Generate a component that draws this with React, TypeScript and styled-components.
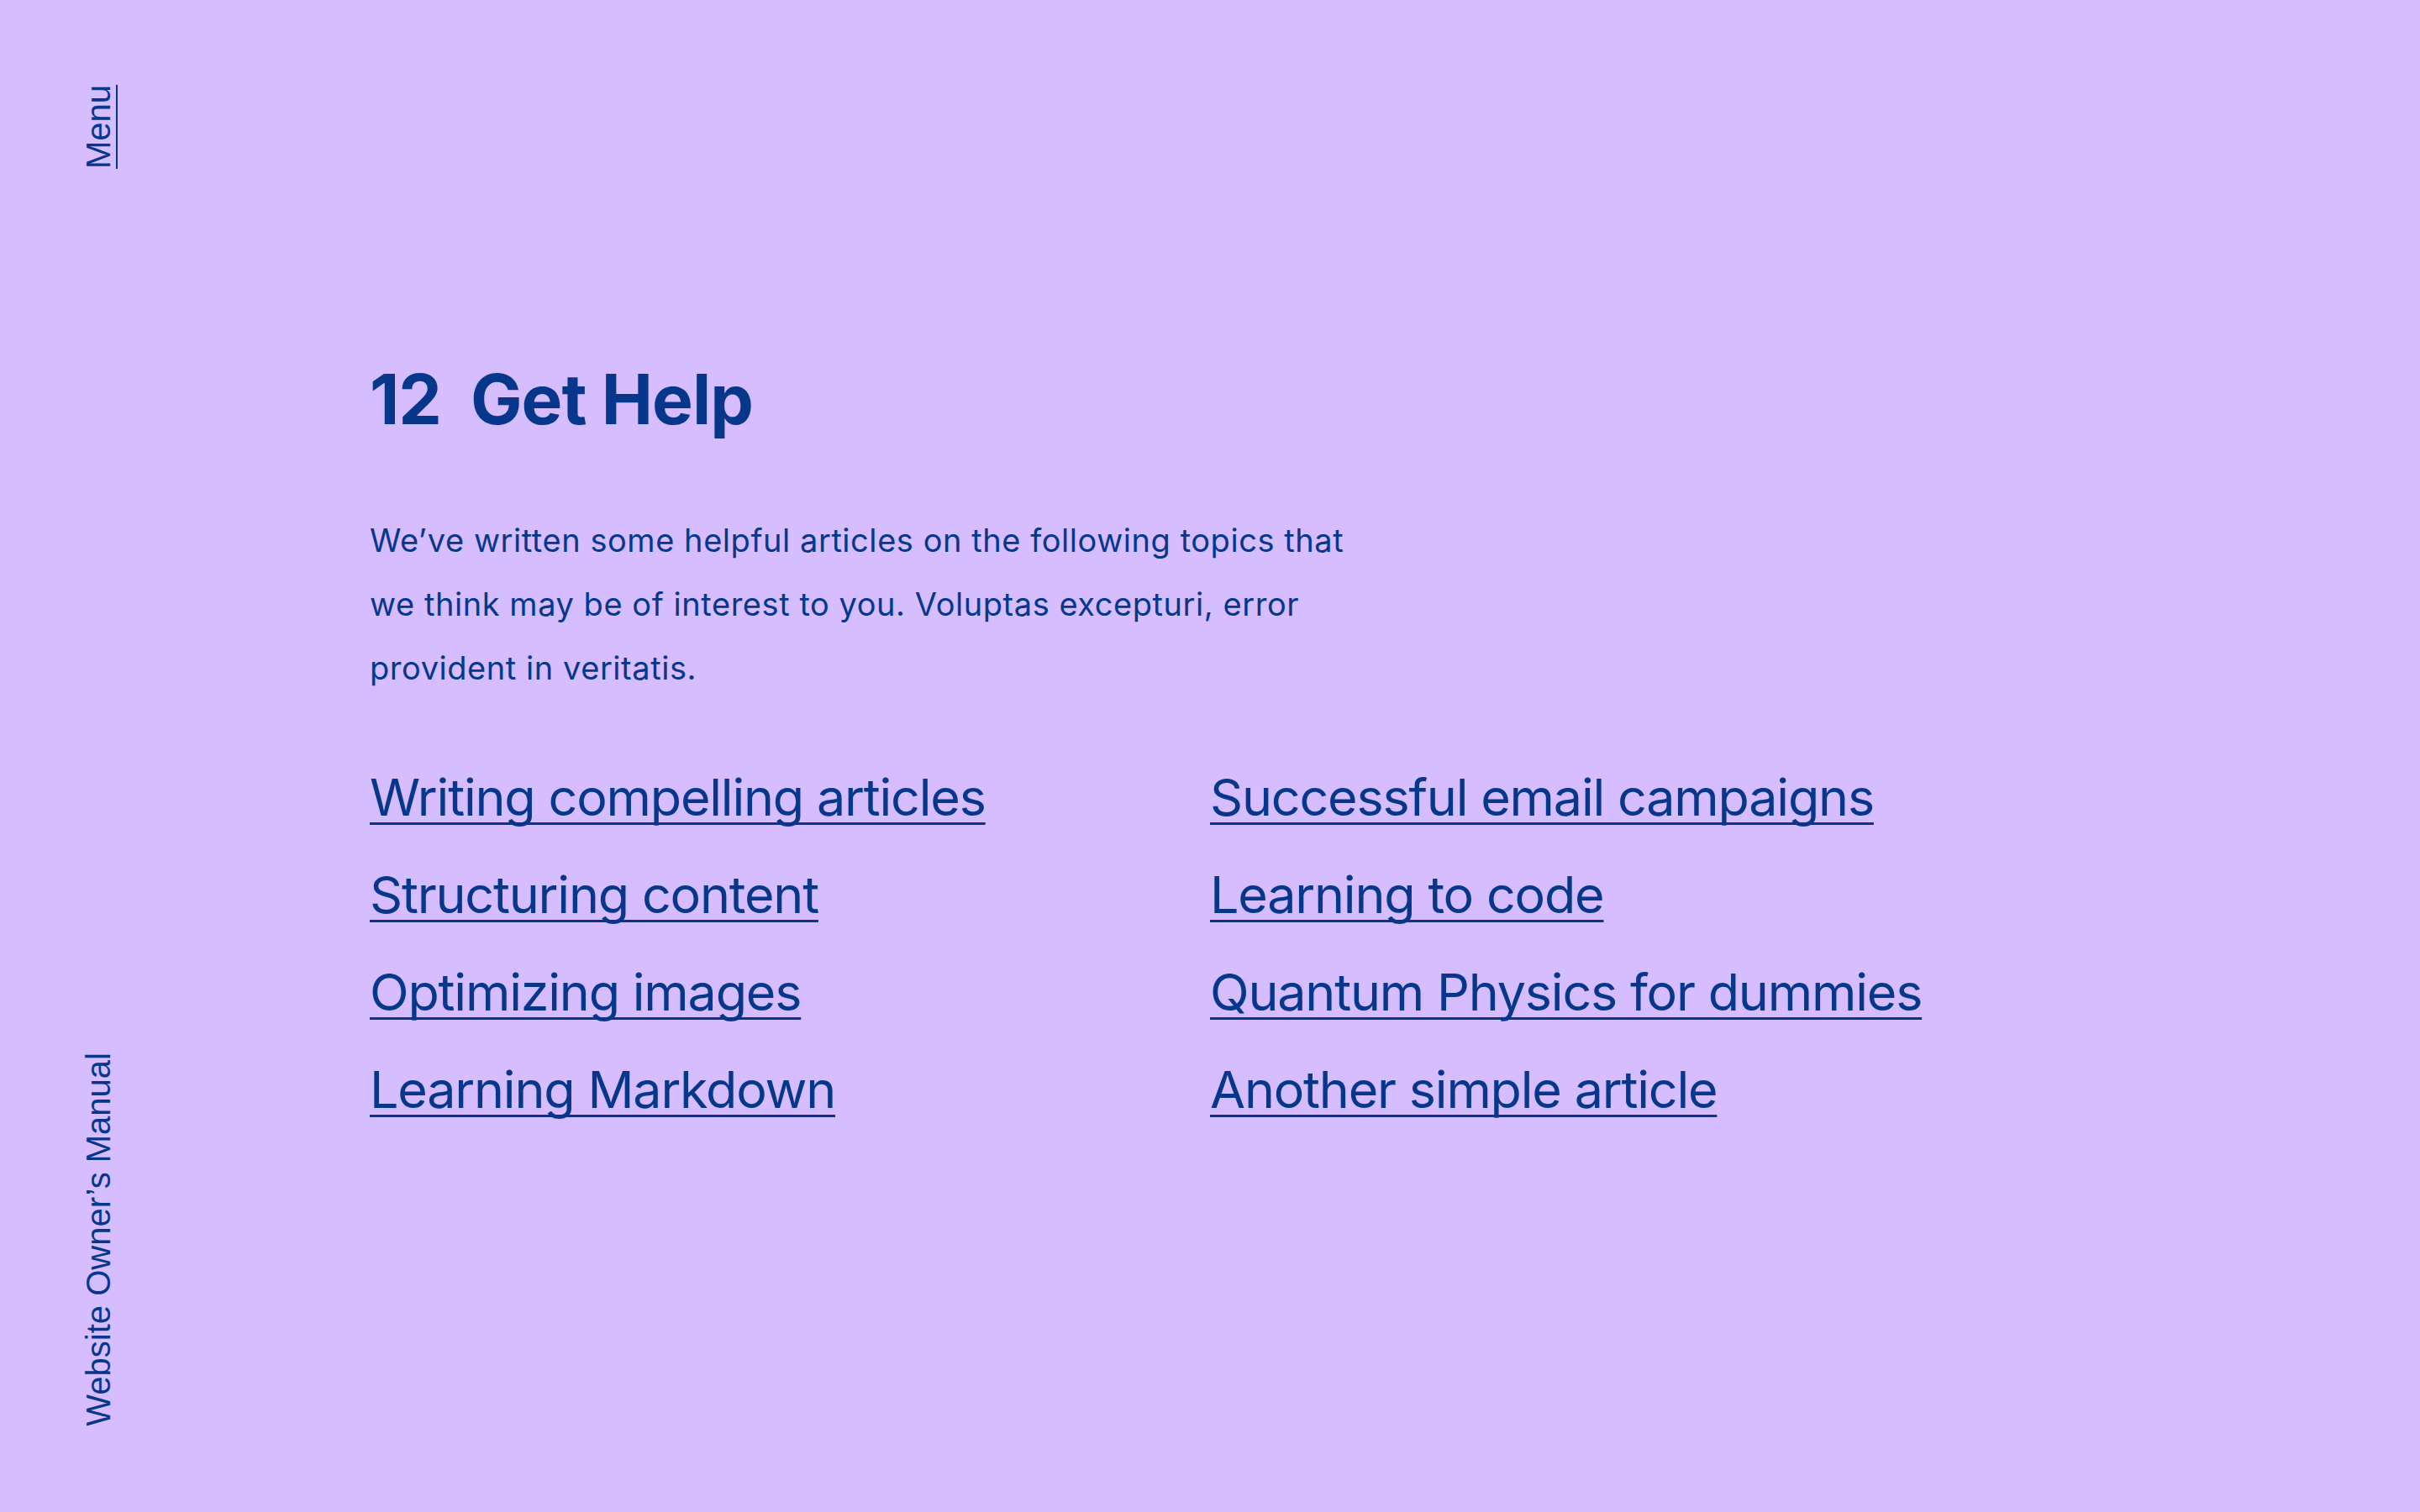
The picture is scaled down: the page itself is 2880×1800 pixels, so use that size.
import React from "react";
import styled, { createGlobalStyle } from "styled-components";

const GlobalStyle = createGlobalStyle`
  html, body {
    margin: 0;
    padding: 0;
    background: #d5bdff;
  }
  body {
    font-family: Inter, "Liberation Sans", sans-serif;
    color: #07378a;
  }
  * { box-sizing: border-box; }
`;

const Page = styled.div`
  display: grid;
  grid-template-columns: 440px 1fr;
  min-height: 100vh;
  background: #d5bdff;
  color: #07378a;
`;

const Sidebar = styled.aside`
  display: flex;
  flex-direction: column;
  justify-content: space-between;
  align-items: flex-start;
  padding: 101px 0 102px 94px;
  height: 100vh;
`;

const VerticalText = styled.a<{ $underline?: boolean }>`
  writing-mode: vertical-rl;
  transform: rotate(180deg);
  font-family: "Liberation Sans", Arial, sans-serif;
  font-size: 40px;
  line-height: 46px;
  color: #07378a;
  white-space: nowrap;
  text-decoration: ${(p) => (p.$underline ? "underline" : "none")};
  text-underline-position: left;
  text-decoration-thickness: 2px;
`;

const Main = styled.main`
  padding-top: 435px;
`;

const Heading = styled.h1`
  margin: 0;
  font-family: Inter, sans-serif;
  font-weight: 700;
  font-size: 82px;
  line-height: 1;
  letter-spacing: -1px;
  color: #07378a;
`;

const Number = styled.span`
  margin-right: 35px;
`;

const Intro = styled.p`
  margin: 88px 0 0;
  max-width: 1200px;
  font-family: Inter, sans-serif;
  font-size: 38px;
  line-height: 76px;
  letter-spacing: 0.55px;
  color: #07378a;
`;

const LinkGrid = styled.ul`
  list-style: none;
  margin: 58px 0 0;
  padding: 0;
  display: grid;
  grid-template-columns: 1000px 1000px;
  grid-auto-flow: column;
  grid-template-rows: repeat(4, 116px);
`;

const Item = styled.li`
  margin: 0;
  font-size: 61px;
  line-height: 116px;
`;

const ArticleLink = styled.a`
  font-family: Inter, sans-serif;
  color: #07378a;
  text-decoration: underline;
  text-decoration-thickness: 3px;
  text-underline-offset: 8px;
  text-decoration-skip-ink: none;
  letter-spacing: -1.2px;
`;

const left = [
  "Writing compelling articles",
  "Structuring content",
  "Optimizing images",
  "Learning Markdown",
];
const right = [
  "Successful email campaigns",
  "Learning to code",
  "Quantum Physics for dummies",
  "Another simple article",
];

export default function App() {
  return (
    <>
      <GlobalStyle />
      <Page>
        <Sidebar>
          <VerticalText href="#" $underline>
            Menu
          </VerticalText>
          <VerticalText href="#">Website Owner’s Manual</VerticalText>
        </Sidebar>
        <Main>
          <Heading>
            <Number>12</Number>Get Help
          </Heading>
          <Intro>
            We’ve written some helpful articles on the following topics that we
            think may be of interest to you. Voluptas excepturi, error provident
            in veritatis.
          </Intro>
          <LinkGrid>
            {[...left, ...right].map((t) => (
              <Item key={t}>
                <ArticleLink href="#">{t}</ArticleLink>
              </Item>
            ))}
          </LinkGrid>
        </Main>
      </Page>
    </>
  );
}
